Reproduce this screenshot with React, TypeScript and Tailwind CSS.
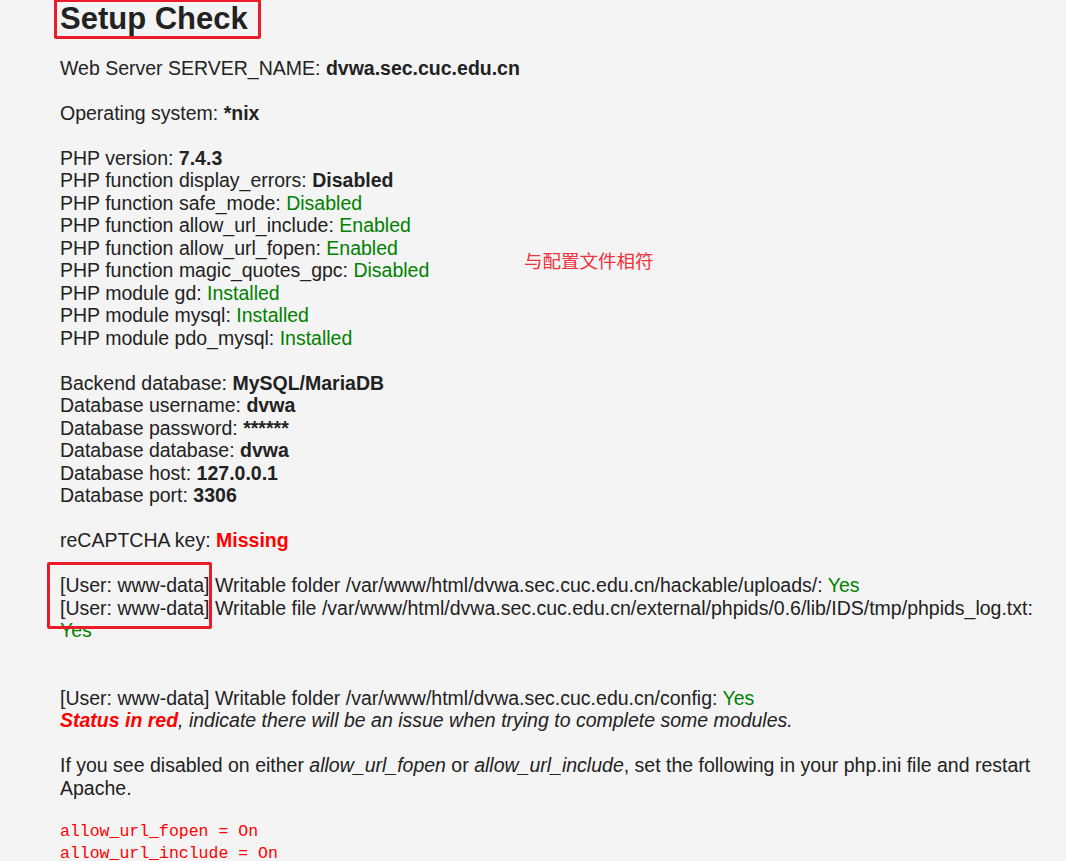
const sans = { fontFamily: '"Liberation Sans", Arial, sans-serif' };

function Ok({ children }: { children: React.ReactNode }) {
  return <span className="text-[#008000]">{children}</span>;
}

export default function App() {
  return (
    <div
      className="min-h-[861px] w-[1066px] bg-[#f4f4f4] pl-[60px] pr-[20px] text-[19.5px] leading-[22.5px] text-[#222]"
      style={sans}
    >
      {/* Heading, boxed in red by the annotator */}
      <h1 className="relative inline-block text-[31px] font-bold leading-[38px] text-[#222]">
        Setup Check
        <span className="absolute -top-[1px] -left-[6px] h-[40px] w-[207px] rounded-[2px] border-[3px] border-[#ea1c2a]" />
      </h1>

      <p className="mt-[18.75px] mb-[22.5px]">
        Web Server SERVER_NAME: <b>dvwa.sec.cuc.edu.cn</b>
      </p>

      <p className="mb-[22.5px]">
        Operating system: <b>*nix</b>
      </p>

      <div className="relative mb-[22.5px]">
        <div>PHP version: <b>7.4.3</b></div>
        <div>PHP function display_errors: <b>Disabled</b></div>
        <div>PHP function safe_mode: <Ok>Disabled</Ok></div>
        <div>PHP function allow_url_include: <Ok>Enabled</Ok></div>
        <div>PHP function allow_url_fopen: <Ok>Enabled</Ok></div>
        <div>PHP function magic_quotes_gpc: <Ok>Disabled</Ok></div>
        <div>PHP module gd: <Ok>Installed</Ok></div>
        <div>PHP module mysql: <Ok>Installed</Ok></div>
        <div>PHP module pdo_mysql: <Ok>Installed</Ok></div>
        {/* annotation */}
        <span
          className="absolute left-[464px] top-[101px] text-[18.5px] leading-[24px] text-[#f0303a]"
          style={{ fontFamily: '"Noto Sans CJK SC", sans-serif' }}
        >
          与配置文件相符
        </span>
      </div>

      <div className="mb-[22.5px]">
        <div>Backend database: <b>MySQL/MariaDB</b></div>
        <div>Database username: <b>dvwa</b></div>
        <div>Database password: <b>******</b></div>
        <div>Database database: <b>dvwa</b></div>
        <div>Database host: <b>127.0.0.1</b></div>
        <div>Database port: <b>3306</b></div>
      </div>

      <p className="mb-[22.5px]">
        reCAPTCHA key: <b className="text-[#ff0000]">Missing</b>
      </p>

      <div className="relative mb-[45px]">
        <div>
          [User: www-data] Writable folder /var/www/html/dvwa.sec.cuc.edu.cn/hackable/uploads/: <Ok>Yes</Ok>
        </div>
        <div>
          [User: www-data] Writable file /var/www/html/dvwa.sec.cuc.edu.cn/external/phpids/0.6/lib/IDS/tmp/phpids_log.txt: <Ok>Yes</Ok>
        </div>
        {/* annotation */}
        <span className="absolute -left-[13px] -top-[12px] h-[67px] w-[165px] rounded-[2px] border-[3px] border-[#ea1c2a]" />
      </div>

      <div className="mb-[22.5px]">
        <div>
          [User: www-data] Writable folder /var/www/html/dvwa.sec.cuc.edu.cn/config: <Ok>Yes</Ok>
        </div>
        <div className="italic">
          <b className="text-[#ff0000]">Status in red</b>, indicate there will be an issue when trying to complete some modules.
        </div>
      </div>

      <p className="mb-[22px]">
        If you see disabled on either <i>allow_url_fopen</i> or <i>allow_url_include</i>, set the following in your php.ini file and restart Apache.
      </p>

      <pre
        className="text-[16.5px] leading-[22px] text-[#ff0000]"
        style={{ fontFamily: '"Liberation Mono", "Courier New", monospace' }}
      >
        {"allow_url_fopen = On\nallow_url_include = On"}
      </pre>
    </div>
  );
}
